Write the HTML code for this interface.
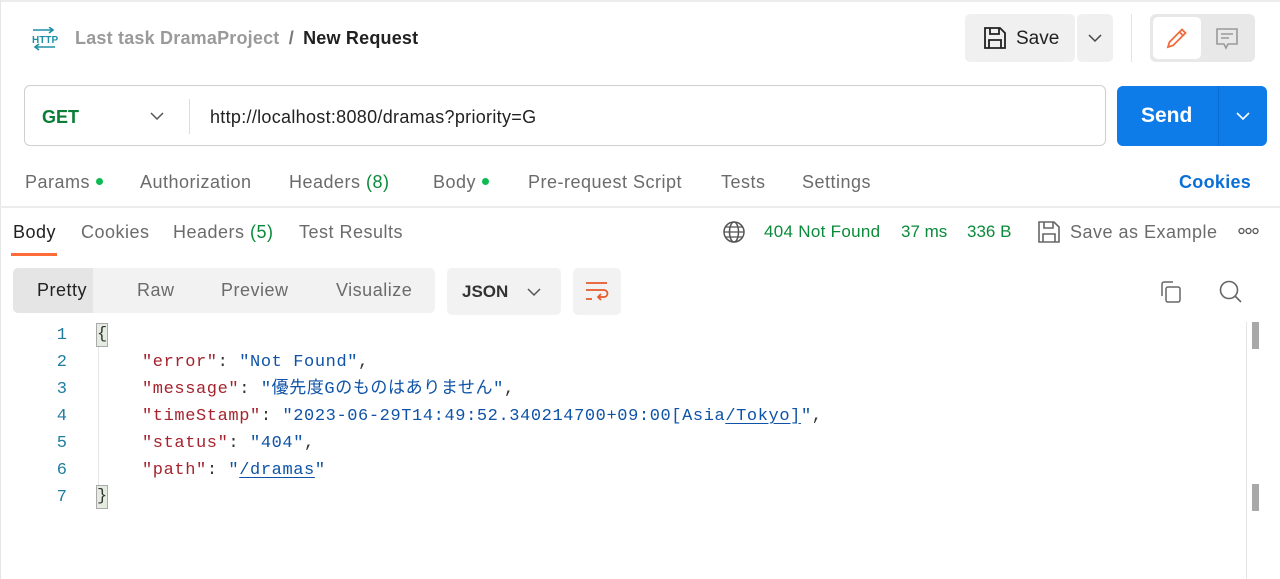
<!DOCTYPE html>
<html><head><meta charset="utf-8"><style>
*{box-sizing:border-box;margin:0;padding:0}
body{width:1280px;height:579px;overflow:hidden;background:#fff;font-family:"Liberation Sans","Noto Sans CJK JP",sans-serif;position:relative;color:#212121}
.a{position:absolute;white-space:nowrap}
.t{font-size:18px;color:#6b6b6b;letter-spacing:0.5px}
.g{color:#0a8a3a}
.dot{display:inline-block;width:7px;height:7px;border-radius:50%;background:#0cbb52;margin-left:6px;vertical-align:middle;position:relative;top:-2px}
.code{font-family:"Liberation Mono","Noto Sans CJK JP",monospace;font-size:17px;letter-spacing:0.6px;line-height:22px;height:22px}
.k{color:#a6232d}.s{color:#0e53a7}.p{color:#333}
.ln{color:#1f7da0;font-family:"Liberation Mono",monospace;font-size:17px;width:30px;text-align:right;line-height:22px}
u{text-decoration:underline;text-underline-offset:3px}
</style></head><body>
<div class="a" style="left:0;top:0;width:1280px;height:2px;background:#ececec"></div>
<div class="a" style="left:0;top:0;width:1px;height:579px;background:#e6e6e6"></div>
<svg class="a" style="left:31px;top:27px" width="28" height="24" viewBox="0 0 28 24"><path d="M2 3h20M18 0l4 3-4 3" stroke="#1e8fa5" stroke-width="1.6" fill="none"/><text x="1" y="16" font-size="10" font-family="Liberation Sans" fill="#1e8fa5" font-weight="bold">HTTP</text><path d="M4 20h20M8 17l-4 3 4 3" stroke="#1e8fa5" stroke-width="1.6" fill="none"/></svg>
<div class="a" style="left:75px;top:28px;font-size:18px;color:#9a9a9a;font-weight:bold;letter-spacing:0.2px">Last task DramaProject <span style="color:#777;margin:0 4px">/</span> <span style="color:#212121">New Request</span></div>
<div class="a" style="left:965px;top:14px;width:110px;height:48px;background:#f0f0f0;border-radius:5px"></div>
<svg class="a" style="left:983px;top:26px" width="24" height="24" viewBox="0 0 24 24"><path d="M2 2h15l5 5v15H2z M7 2v6h9V2 M6 22v-8h12v8" stroke="#222" stroke-width="1.8" fill="none"/></svg>
<div class="a" style="left:1016px;top:28px;font-size:19px;color:#222">Save</div>
<div class="a" style="left:1077px;top:14px;width:36px;height:48px;background:#f0f0f0;border-radius:5px"></div>
<svg class="a" style="left:1087px;top:32px" width="16" height="12"><path d="M2 3l6 6 6-6" stroke="#444" stroke-width="1.5" fill="none"/></svg>
<div class="a" style="left:1131px;top:14px;width:1px;height:48px;background:#e3e3e3"></div>
<div class="a" style="left:1150px;top:14px;width:105px;height:48px;background:#e8e8e8;border-radius:6px"></div>
<div class="a" style="left:1153px;top:17px;width:48px;height:42px;background:#fff;border-radius:5px"></div>
<svg class="a" style="left:1165px;top:26px" width="24" height="24" viewBox="0 0 24 24"><path d="M3 21l1.5-5L17 3.5l3.5 3.5L8 19.5z M14.5 6l3.5 3.5" stroke="#f26b3a" stroke-width="1.8" fill="none"/></svg>
<svg class="a" style="left:1215px;top:27px" width="24" height="24" viewBox="0 0 24 24"><path d="M2 2h20v15H13l-2 4-2-4H2z M6 7h12M6 11h8" stroke="#999" stroke-width="1.6" fill="none"/></svg>
<div class="a" style="left:24px;top:85px;width:1082px;height:61px;border:1px solid #cfcfcf;border-radius:6px"></div>
<div class="a" style="left:42px;top:107px;font-size:18px;color:#0a7d36;font-weight:bold">GET</div>
<svg class="a" style="left:149px;top:110px" width="16" height="12"><path d="M2 3l6 6 6-6" stroke="#555" stroke-width="1.5" fill="none"/></svg>
<div class="a" style="left:189px;top:99px;width:1px;height:35px;background:#ddd"></div>
<div class="a" style="left:210px;top:107px;font-size:18px;color:#222;letter-spacing:0.3px">http://localhost:8080/dramas?priority=G</div>
<div class="a" style="left:1117px;top:86px;width:150px;height:60px;background:#0d7ce9;border-radius:6px"></div>
<div class="a" style="left:1218px;top:86px;width:1px;height:60px;background:#0a6cd0"></div>
<div class="a" style="left:1141px;top:104px;font-size:21px;color:#fff;font-weight:bold">Send</div>
<svg class="a" style="left:1235px;top:110px" width="16" height="12"><path d="M2 3l6 6 6-6" stroke="#fff" stroke-width="1.6" fill="none"/></svg>
<div class="a t" style="left:25px;top:172px">Params<span class="dot"></span></div>
<div class="a t" style="left:140px;top:172px">Authorization</div>
<div class="a t" style="left:289px;top:172px">Headers <span class="g">(8)</span></div>
<div class="a t" style="left:433px;top:172px">Body<span class="dot"></span></div>
<div class="a t" style="left:528px;top:172px">Pre-request Script</div>
<div class="a t" style="left:721px;top:172px">Tests</div>
<div class="a t" style="left:802px;top:172px">Settings</div>
<div class="a" style="left:1179px;top:172px;font-size:18px;color:#0b6fd6;font-weight:bold;letter-spacing:0.3px">Cookies</div>
<div class="a" style="left:0;top:206px;width:1280px;height:2px;background:#ececec"></div>
<div class="a t" style="left:13px;top:222px;color:#212121">Body</div>
<div class="a" style="left:11px;top:253px;width:46px;height:3px;background:#ff6c37"></div>
<div class="a t" style="left:81px;top:222px">Cookies</div>
<div class="a t" style="left:173px;top:222px">Headers <span class="g">(5)</span></div>
<div class="a t" style="left:299px;top:222px">Test Results</div>
<svg class="a" style="left:722px;top:220px" width="24" height="24" viewBox="0 0 24 24"><circle cx="12" cy="12" r="10" stroke="#555" stroke-width="1.5" fill="none"/><ellipse cx="12" cy="12" rx="4.5" ry="10" stroke="#555" stroke-width="1.5" fill="none"/><path d="M2 12h20M4 7h16M4 17h16" stroke="#555" stroke-width="1.3"/></svg>
<div class="a g" style="left:764px;top:222px;font-size:17px;letter-spacing:0.3px">404 Not Found</div>
<div class="a g" style="left:901px;top:222px;font-size:17px">37 ms</div>
<div class="a g" style="left:967px;top:222px;font-size:17px">336 B</div>
<svg class="a" style="left:1037px;top:220px" width="24" height="24" viewBox="0 0 24 24"><path d="M2 2h15l5 5v15H2z M7 2v6h9V2 M6 22v-8h12v8" stroke="#666" stroke-width="1.6" fill="none"/></svg>
<div class="a t" style="left:1070px;top:222px">Save as Example</div>
<svg class="a" style="left:1238px;top:227px" width="22" height="8"><circle cx="3.5" cy="4" r="2.5" stroke="#555" stroke-width="1.3" fill="none"/><circle cx="10.5" cy="4" r="2.5" stroke="#555" stroke-width="1.3" fill="none"/><circle cx="17.5" cy="4" r="2.5" stroke="#555" stroke-width="1.3" fill="none"/></svg>
<div class="a" style="left:13px;top:268px;width:422px;height:45px;background:#f2f2f2;border-radius:5px"></div>
<div class="a" style="left:13px;top:268px;width:80px;height:45px;background:#e5e5e5;border-radius:5px 0 0 5px"></div>
<div class="a t" style="left:37px;top:280px;color:#222">Pretty</div>
<div class="a t" style="left:137px;top:280px">Raw</div>
<div class="a t" style="left:221px;top:280px">Preview</div>
<div class="a t" style="left:336px;top:280px">Visualize</div>
<div class="a" style="left:447px;top:268px;width:114px;height:47px;background:#f2f2f2;border-radius:5px"></div>
<div class="a" style="left:462px;top:282px;font-size:17px;color:#333;font-weight:bold">JSON</div>
<svg class="a" style="left:526px;top:286px" width="16" height="12"><path d="M2 3l6 6 6-6" stroke="#555" stroke-width="1.5" fill="none"/></svg>
<div class="a" style="left:573px;top:268px;width:48px;height:47px;background:#f2f2f2;border-radius:5px"></div>
<svg class="a" style="left:585px;top:280px" width="24" height="24" viewBox="0 0 24 24"><path d="M1 3h21M1 10h18a3.5 3.5 0 0 1 0 7h-5M16 14l-3 3 3 3M1 19h6" stroke="#e8582b" stroke-width="1.7" fill="none"/></svg>
<svg class="a" style="left:1159px;top:280px" width="24" height="24" viewBox="0 0 24 24"><path d="M3 16V4a2 2 0 0 1 2-2h9" stroke="#666" stroke-width="1.5" fill="none"/><rect x="7" y="7" width="14" height="15" rx="2" stroke="#666" stroke-width="1.5" fill="none"/></svg>
<svg class="a" style="left:1218px;top:279px" width="26" height="26" viewBox="0 0 26 26"><circle cx="11" cy="11" r="8.5" stroke="#666" stroke-width="1.6" fill="none"/><path d="M17 17l6 6" stroke="#666" stroke-width="1.6"/></svg>
<div class="a" style="left:1246px;top:322px;width:1px;height:257px;background:#e5e5e5"></div>
<div class="a" style="left:1252px;top:322px;width:7px;height:27px;background:#a8a8a8"></div>
<div class="a" style="left:1252px;top:484px;width:7px;height:27px;background:#a8a8a8"></div>
<div class="a" style="left:98px;top:345px;width:1px;height:140px;background:#e6e6e6"></div>
<div class="a ln" style="left:37px;top:325px">1</div>
<div class="a ln" style="left:37px;top:352px">2</div>
<div class="a ln" style="left:37px;top:379px">3</div>
<div class="a ln" style="left:37px;top:406px">4</div>
<div class="a ln" style="left:37px;top:433px">5</div>
<div class="a ln" style="left:37px;top:460px">6</div>
<div class="a ln" style="left:37px;top:487px">7</div>
<div class="a code p" style="left:97px;top:324px;background:#e4ece2;outline:1px solid #aaa;width:10px">{</div>
<div class="a code" style="left:142px;top:352px"><span class="k">"error"</span><span class="p">: </span><span class="s">"Not Found"</span><span class="p">,</span></div>
<div class="a code" style="left:142px;top:379px"><span class="k">"message"</span><span class="p">: </span><span class="s">"優先度Gのものはありません"</span><span class="p">,</span></div>
<div class="a code" style="left:142px;top:406px"><span class="k">"timeStamp"</span><span class="p">: </span><span class="s">"2023-06-29T14:49:52.340214700+09:00[Asia<u>/Tokyo]</u>"</span><span class="p">,</span></div>
<div class="a code" style="left:142px;top:433px"><span class="k">"status"</span><span class="p">: </span><span class="s">"404"</span><span class="p">,</span></div>
<div class="a code" style="left:142px;top:460px"><span class="k">"path"</span><span class="p">: </span><span class="s">"<u>/dramas</u>"</span></div>
<div class="a code p" style="left:97px;top:486px;background:#e4ece2;outline:1px solid #aaa;width:10px">}</div>
</body></html>
